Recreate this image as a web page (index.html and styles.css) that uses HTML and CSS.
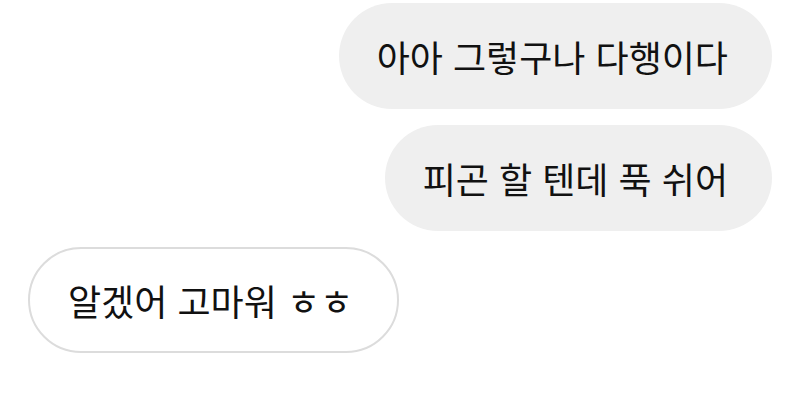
FILE: index.html
```html
<!DOCTYPE html>
<html lang="ko">
<head>
    <meta charset="UTF-8">
    <meta name="viewport" content="width=device-width, initial-scale=1.0">
    <title>Chat</title>
    <link rel="stylesheet" href="styles.css">
</head>
<body>
    <div class="chat">
        <div class="msg sent">아아 그렇구나 다행이다</div>
        <div class="msg sent">피곤 할 텐데 푹 쉬어</div>
        <div class="msg received">알겠어 고마워 ㅎㅎ</div>
    </div>
</body>
</html>
```

FILE: styles.css
```css
body {
    margin: 0;
    padding: 0;
    background: #fff;
    font-family: "Noto Sans CJK KR", "Noto Sans", sans-serif;
    color: #111;
}
.chat {
    display: flex;
    flex-direction: column;
    gap: 16px;
    padding: 3px 28px 0 28px;
}
.msg {
    font-size: 36px;
    line-height: 1;
    padding: 0 44px 0 38px;
    border-radius: 54px;
    box-sizing: border-box;
    height: 106px;
    display: flex;
    align-items: center;
}
.sent {
    align-self: flex-end;
    background: #efefef;
}
.received {
    align-self: flex-start;
    background: #fff;
    border: 2px solid #dcdcdc;
}
```
